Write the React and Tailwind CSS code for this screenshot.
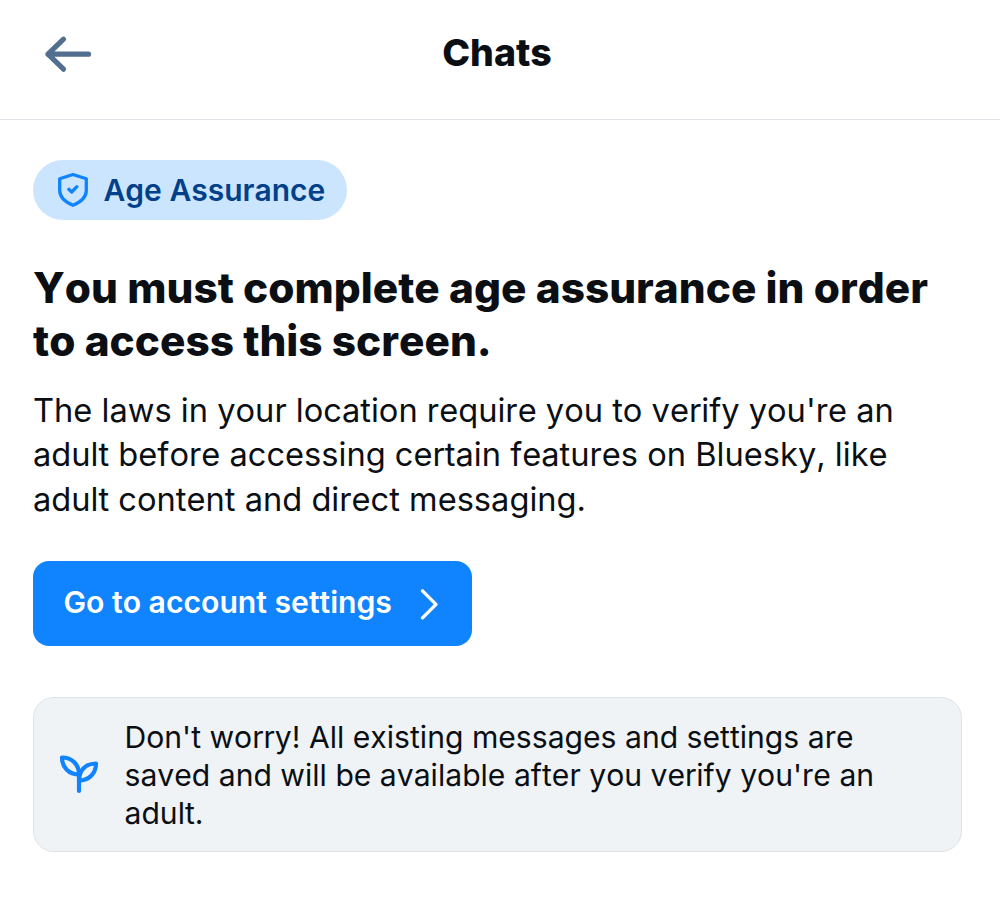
import React from "react";

function ArrowLeft() {
  return (
    <svg width="48" height="40" viewBox="0 0 48 40" fill="none" stroke="#526f8f" strokeWidth="5.2" strokeLinecap="round" strokeLinejoin="round">
      <path d="M44.500 20.200H4M19.500 5.200L4 20.200l15.500 15" />
    </svg>
  );
}

function ShieldCheck() {
  return (
    <svg width="32" height="36" viewBox="0 0 32 36" fill="none" stroke="#1083fe" strokeWidth="3.3" strokeLinejoin="round">
      <path d="M16 2.500L29.300 6.800V18.500C29.300 25.500 22.500 30.500 16 33.300C9.500 30.500 2.700 25.500 2.700 18.500V6.800Z" />
      <path d="M11.800 17.300l2.900 2.700 5.200-5.300" strokeLinecap="round" />
    </svg>
  );
}

function ChevronRight() {
  return (
    <svg width="20" height="34" viewBox="0 0 20 34" fill="none" stroke="#ffffff" strokeWidth="3.4" strokeLinecap="round" strokeLinejoin="round">
      <path d="M3.500 3.900L17 17.400 3.500 30.900" />
    </svg>
  );
}

function Leaf() {
  return (
    <svg width="40" height="40" viewBox="0 0 40 40" fill="none" stroke="#1083fe" strokeWidth="4.2" strokeLinecap="round" strokeLinejoin="round">
      <path d="M20 37V20.500C20 10.500 13 3.500 3 3.500C3 13.500 10 20.500 20 20.500" />
      <path d="M20 26.500C20 16.500 26.500 9.500 37 9.500C37 19.500 30 26.500 20 26.500" />
    </svg>
  );
}

export default function App() {
  return (
    <div className="h-[906px] w-[1000px] overflow-hidden bg-white font-['Inter',sans-serif] text-[#0b0f14] whitespace-nowrap [font-kerning:none] [font-variant-ligatures:none]">
      <header className="grid h-[120px] grid-cols-[1fr_auto_1fr] items-start border-b border-[#dfe3e7] px-11 pt-[30px]">
        <button className="mt-1 w-12" aria-label="Back">
          <ArrowLeft />
        </button>
        <h1 className="-ml-1.5 text-[37.500px] leading-[45px] font-extrabold">Chats</h1>
      </header>

      <main className="flex flex-col items-start pl-[33px] pt-10">
        <div className="flex h-[60px] w-[314px] items-center gap-[14.500px] rounded-full bg-[#cce5ff] pl-6">
          <ShieldCheck />
          <span className="text-[30px] font-semibold text-[#02418a]">Age Assurance</span>
        </div>

        <h2 className="mt-[41px] text-[42.350px] leading-[53px] font-extrabold">
          You must complete age assurance in order
          <br />
          to access this screen.
        </h2>

        <p className="mt-[21px] text-[32.630px] leading-[44.400px]">
          The laws in your location require you to verify you're an
          <br />
          adult before accessing certain features on Bluesky, like
          <br />
          adult content and direct messaging.
        </p>

        <button className="mt-10 flex h-[85px] w-[439px] items-center justify-between rounded-[16px] bg-[#1083fe] pl-[30.500px] pr-[33px] text-[30.150px] font-semibold text-white">
          <span className="pb-0.5">Go to account settings</span>
          <ChevronRight />
        </button>

        <div className="mt-[50.500px] flex h-[155px] w-[929px] items-center gap-[25.500px] rounded-[21px] border border-[#dee3e8] bg-[#eff3f5] pl-[25px]">
          <Leaf />
          <p className="pt-[3px] text-[30.130px] leading-[37.800px]">
            Don't worry! All existing messages and settings are
            <br />
            saved and will be available after you verify you're an
            <br />
            adult.
          </p>
        </div>
      </main>
    </div>
  );
}
